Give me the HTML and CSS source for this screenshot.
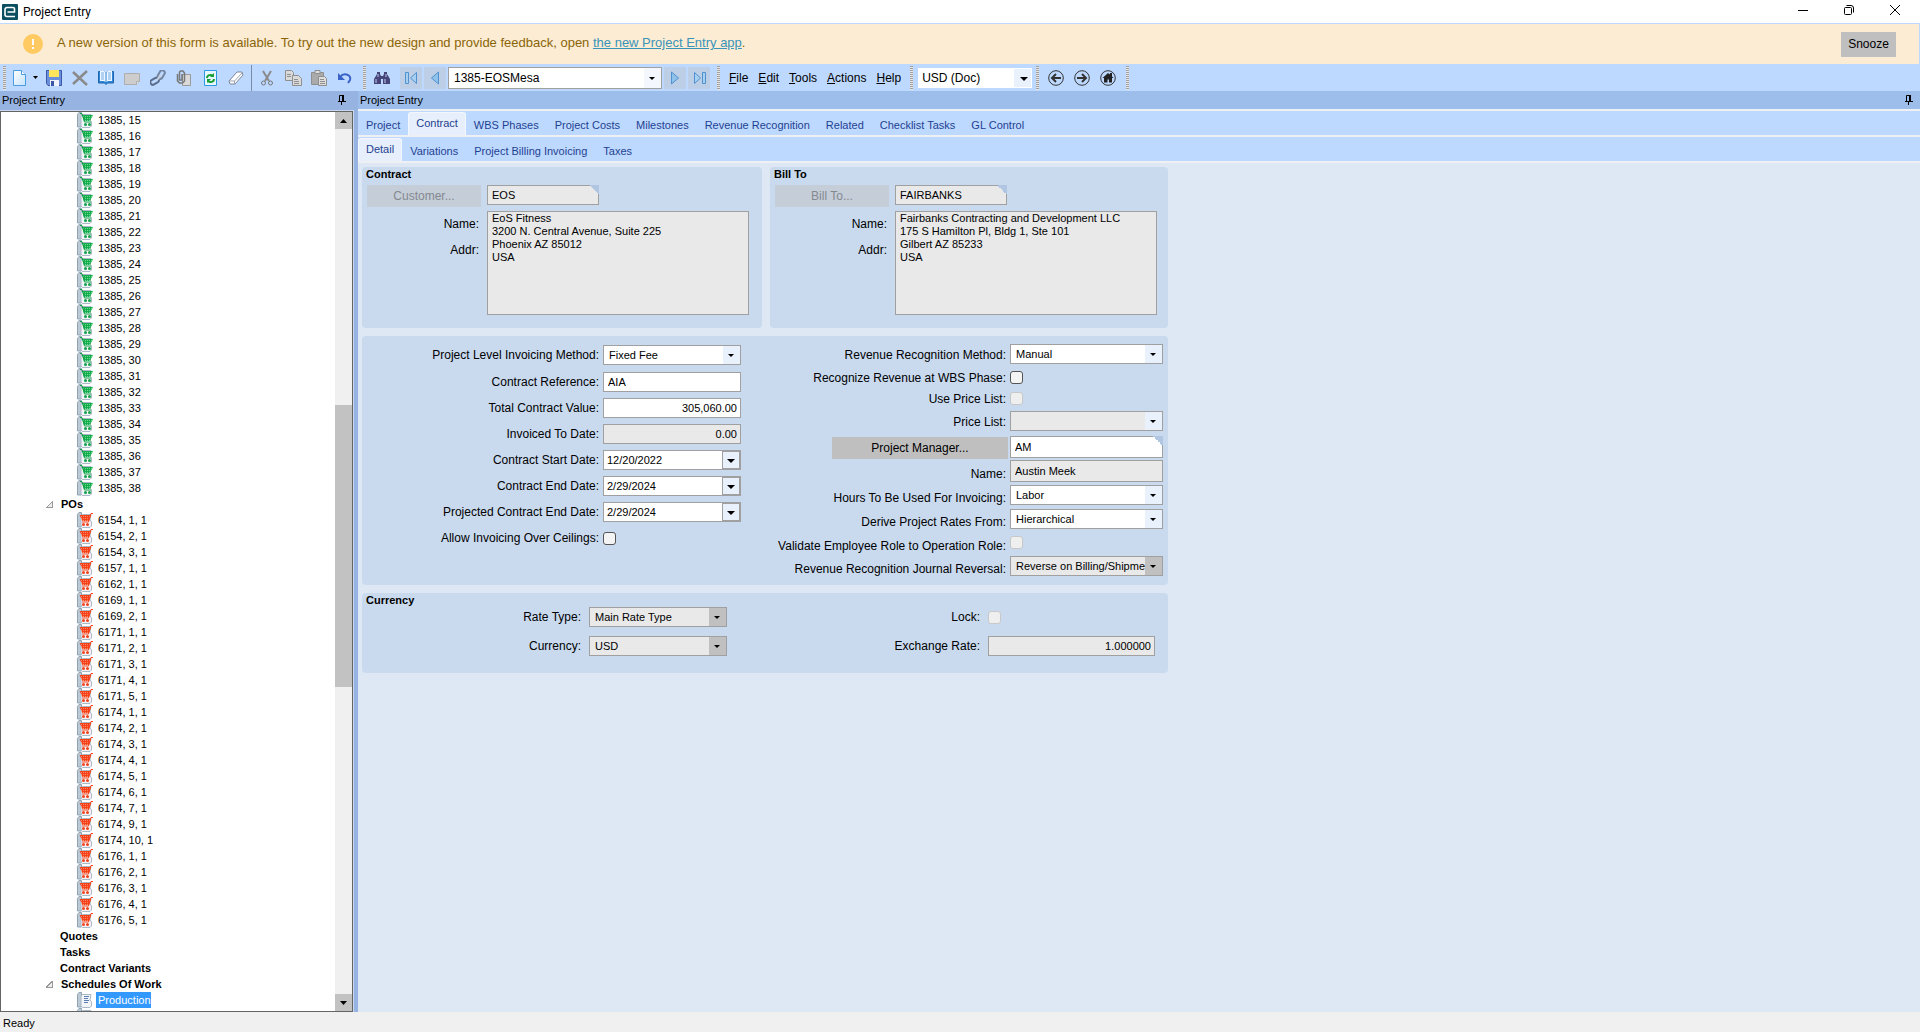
FILE: index.html
```html
<!DOCTYPE html>
<html lang="en">
<head>
<meta charset="utf-8">
<title>Project Entry</title>
<link rel="stylesheet" href="styles.css">
</head>
<body>
<svg class="defs" aria-hidden="true">
  <defs>
    <pattern id="dots-green" width="2" height="2" patternUnits="userSpaceOnUse"><rect width="2" height="2" fill="#14ac4c"/><rect width="1" height="1" fill="#6fd893"/></pattern>
    <pattern id="dots-red" width="2" height="2" patternUnits="userSpaceOnUse"><rect width="2" height="2" fill="#f5401a"/><rect width="1" height="1" fill="#ff8a66"/></pattern>
    <symbol id="folder" viewBox="0 0 16 16">
      <path d="M.5 2.500 2 .5h2.500v14.500H.5z" fill="#bccad6" stroke="#8fa3b3"/>
      <path d="M5.500 2.500 4 4v10l1.500 1.500H13l1.500-1.500v-4L13 8l1-5.500z" fill="#f1f5f8" stroke="#a9b8c4"/>
    </symbol>
    <symbol id="so" viewBox="0 0 16 16">
      <use href="#folder"/>
      <path d="M5 3h11l-3 6H7z" fill="url(#dots-green)"/>
      <path d="M3 1.500h2L7.500 10H14" fill="none" stroke="#12a048"/>
      <circle cx="8.500" cy="12.500" r="1.500" fill="#12a048"/><circle cx="12.500" cy="12.500" r="1.500" fill="#12a048"/>
    </symbol>
    <symbol id="po" viewBox="0 0 16 16">
      <use href="#folder"/>
      <path d="M2.500 3H14l-2 6H5.500z" fill="url(#dots-red)"/>
      <path d="M16 1.500h-2L11.500 10H5" fill="none" stroke="#f5401a"/>
      <circle cx="6.500" cy="12.500" r="1.500" fill="#f5401a"/><circle cx="10.500" cy="12.500" r="1.500" fill="#f5401a"/>
    </symbol>
    <symbol id="doc" viewBox="0 0 16 16">
      <use href="#folder"/>
      <path d="M7 4.500h5M7 6.500h4M7 8.500h5M7 10.500h4" stroke="#5d7fb5"/>
    </symbol>
    <symbol id="pin" viewBox="0 0 8 10">
      <path d="M1.500 6V.5H6M0 6.500h8M3.500 6v4" fill="none" stroke="#000"/><path d="M4 0h2v6H4z"/>
    </symbol>
    <linearGradient id="paper" x1="0" y1="0" x2="1" y2="1"><stop offset="0" stop-color="#fff"/><stop offset="1" stop-color="#c4e2fa"/></linearGradient>
  </defs>
</svg>

<header class="titlebar">
  <svg class="logo" width="16" height="16" viewBox="0 0 16 16"><rect width="16" height="16" rx="1" fill="#0b4f60"/><path d="M13 12.500H5a2 2 0 0 1-2-2V5.500a2 2 0 0 1 2-2h6a1.500 1.500 0 0 1 1.500 1.500v3H5.500" fill="none" stroke="#fff" stroke-width="1.600"/></svg>
  <h1>Project Entry</h1>
  <div class="window-buttons">
    <button aria-label="Minimize"><svg width="12" height="12"><path d="M1 6.500h10" stroke="#000"/></svg></button>
    <button aria-label="Restore"><svg width="12" height="12" fill="none" stroke="#000"><rect x="1.500" y="3.500" width="7" height="7" rx="1"/><path d="M3.500 1.500H8a2.500 2.500 0 0 1 2.500 2.500v4.500"/></svg></button>
    <button aria-label="Close"><svg width="12" height="12"><path d="m1 1 10 10M11 1 1 11" stroke="#000"/></svg></button>
  </div>
</header>

<section class="banner">
  <svg width="20" height="20"><circle cx="10" cy="10" r="10" fill="#ffca62"/><path d="M10 5v6M10 13v2" stroke="#fff" stroke-width="2"/></svg>
  <p>A new version of this form is available. To try out the new design and provide feedback, open <a href="#">the new Project Entry app</a>.</p>
  <button class="snooze">Snooze</button>
</section>

<nav class="toolbar" aria-label="Main">
  <span class="grip"></span>
  <div class="tools">
    <button class="wide" aria-label="New"><svg width="13" height="16"><path d="M.5.5h8l4 4v11H.5z" fill="url(#paper)" stroke="#4a9be0"/><path d="M8.500.5v4h4" fill="#fff" stroke="#4a9be0"/></svg><svg width="5" height="3"><path d="M0 0h5L2.500 3z"/></svg></button>
    <button aria-label="Save"><svg width="16" height="16"><path d="M.5.5h15v15H2l-1.500-2z" fill="#6c8fdc" stroke="#3b57a8"/><path d="M3 0h10v7H3z" fill="#ffe45c"/><path d="M4 10h9v6H4z" fill="#eef3fb"/><path d="M5 11h3v5H5z" fill="#3b57a8"/></svg></button>
    <button aria-label="Delete"><svg width="16" height="16"><path d="m1 2 14 13M15 1 1 14" stroke="#8a8a8a" stroke-width="2.500"/></svg></button>
    <button aria-label="Details"><svg width="16" height="15"><path d="M.5 1.500h6L8 3l1.500-1.500h6V13h-6L8 14.500 6.500 13h-6z" fill="#2e86d8" stroke="#1f66b0"/><path d="M2 1h4l1.500 1v10L6 11H2zM14 1h-4L8.500 2v10l1.500-1h4z" fill="#eef7ff"/><path d="M3 3h3M3 5h3M3 7h3M3 9h3M10 3h3M10 5h3M10 7h3M10 9h3" stroke="#75aee5"/></svg></button>
    <button aria-label="Memo"><svg width="16" height="14"><path d="M.5 2.500h15v8l-3 3H.5z" fill="#cdcdcd" stroke="#adadad"/><path d="M12.500 13.500v-3h3" fill="#eee" stroke="#adadad"/></svg></button>
    <button aria-label="Link"><svg width="16" height="16" fill="none"><rect x="-5" y="-2.500" width="9" height="5" rx="2.500" transform="translate(5 11) rotate(-30)" stroke="#5b6d8c" stroke-width="2"/><rect x="-4" y="-2.500" width="9" height="5" rx="2.500" transform="translate(11 5) rotate(-60)" stroke="#73859f" stroke-width="2"/><path d="m7 10 4-5" stroke="#c8d2e2" stroke-width="2"/></svg></button>
    <button aria-label="Attachments"><svg width="16" height="16"><path d="M6.500 4.500h8v11h-8z" fill="#d9d9d9" stroke="#999"/><path d="M1.500 4v7l2 2h3l2-2V3L7 1H4.500L3.500 2v8H6V4" fill="none" stroke="#777" stroke-width="1.500"/></svg></button>
    <button aria-label="Refresh"><svg width="13" height="16"><path d="M.5.5h12v15H.5z" fill="#e8f7ff" stroke="#2c9ae0"/><path d="M3 8c0-3 4-4 6-2M10 9c0 3-4 4-6 2" fill="none" stroke="#18a035" stroke-width="2"/><path d="M10 3v4H6zM3 13V9h4z" fill="#18a035"/></svg></button>
    <button aria-label="Clear"><svg width="16" height="14"><path d="m1 10 8-9h5l1 3-8 9H2z" fill="#fff" stroke="#7d8799"/><path d="M1.500 10h5L14 2M6.500 10v3" stroke="#9ba5b5" fill="none"/></svg></button>
    <span class="divider"></span>
    <button aria-label="Cut"><svg width="12" height="16" fill="none"><path d="M2 1l6 10M10 1 4 11" stroke="#8a8a8a" stroke-width="2"/><circle cx="2.500" cy="13" r="2" stroke="#777"/><circle cx="9.500" cy="13" r="2" stroke="#777"/></svg></button>
    <button aria-label="Copy"><svg width="17" height="16" fill="#dadada" stroke="#8f8f8f"><path d="M.5.5h6l2 2v8h-8z"/><path d="M7.500 5.500h6l3 3v7h-9z"/><path d="M2 4.500h4M2 6.500h4M9 9.500h4M9 11.500h5M9 13.500h5"/></svg></button>
    <button aria-label="Paste"><svg width="16" height="16" stroke="#8f8f8f"><path d="M.5 2.500h12v12H.5z" fill="#aaa"/><path d="M4 .5h5v3H4z" fill="#ddd"/><path d="M7.500 6.500h6l2 2v7h-8z" fill="#ddd"/><path d="M9 9.500h4M9 11.500h5M9 13.500h5"/></svg></button>
    <button aria-label="Undo"><svg width="14" height="13"><path d="M2 6c4-5 12-2 10 3l-2 3" fill="none" stroke="#3b62c8" stroke-width="2"/><path d="M0 2v7h7z" fill="#3b62c8"/></svg></button>
  </div>
  <span class="grip"></span>
  <div class="record-nav">
    <button class="find" aria-label="Find"><svg width="16" height="14" fill="#45457c"><path d="M3 1h3v2l1 2v8H0V8l3-5zM13 1h-3v2L9 5v8h7V8l-3-5z"/><path d="M6 5h4v3H6z"/><path d="M2 8v4M11 8v4M4 3v3M12 3v3" stroke="#c5cbe8"/></svg></button>
    <button class="step" aria-label="First record"><svg width="13" height="14" fill="#a7d0f0" stroke="#5191cf"><path d="M.5 1.500h3v11h-3zM11.500 1.500v11L5.500 7z"/></svg></button>
    <button class="step" aria-label="Previous record"><svg width="13" height="14" fill="#8fc2ea" stroke="#5191cf"><path d="M9.500 1v12L2.500 7z"/></svg></button>
    <div class="combo record"><select aria-label="Project"><option>1385-EOSMesa</option></select></div>
    <button class="step" aria-label="Next record"><svg width="13" height="14" fill="#8fc2ea" stroke="#5191cf"><path d="M2.500 1v12l7-6z"/></svg></button>
    <button class="step" aria-label="Last record"><svg width="13" height="14" fill="#a7d0f0" stroke="#5191cf"><path d="M9.500 1.500h3v11h-3zM1.500 1.500v11l6-5.500z"/></svg></button>
  </div>
  <span class="grip"></span>
  <div class="menus">
    <button><u>F</u>ile</button><button><u>E</u>dit</button><button><u>T</u>ools</button><button><u>A</u>ctions</button><button><u>H</u>elp</button>
  </div>
  <span class="grip"></span>
  <div class="combo currency"><select aria-label="Display currency"><option>USD (Doc)</option></select></div>
  <span class="grip"></span>
  <div class="history">
    <button aria-label="Back"><svg width="16" height="16" fill="none" stroke="#333"><circle cx="8" cy="8" r="7.300"/><path d="M13 8H4M8 4 4 8l4 4" stroke-width="2"/></svg></button>
    <button aria-label="Forward"><svg width="16" height="16" fill="none" stroke="#333"><circle cx="8" cy="8" r="7.300"/><path d="M3 8h9M8 4l4 4-4 4" stroke-width="2"/></svg></button>
    <button aria-label="Home"><svg width="16" height="16"><circle cx="8" cy="8" r="7.300" fill="none" stroke="#333"/><path d="m2.500 8 5.500-5 2 1.500V3h2v3.500L13.500 8H12v4.500H9v-3H7.500v3H4V8z" fill="#222"/></svg></button>
  </div>
  <span class="grip"></span>
</nav>

<div class="workspace">
  <aside class="tree-pane">
    <header class="pane-head"><h2>Project Entry</h2><button aria-label="Pin tree"><svg width="8" height="10"><use href="#pin"/></svg></button></header>
    <div class="tree-box">
      <ul class="tree">
        <li class="leaf"><svg><use href="#so"/></svg><span>1385, 15</span></li>
        <li class="leaf"><svg><use href="#so"/></svg><span>1385, 16</span></li>
        <li class="leaf"><svg><use href="#so"/></svg><span>1385, 17</span></li>
        <li class="leaf"><svg><use href="#so"/></svg><span>1385, 18</span></li>
        <li class="leaf"><svg><use href="#so"/></svg><span>1385, 19</span></li>
        <li class="leaf"><svg><use href="#so"/></svg><span>1385, 20</span></li>
        <li class="leaf"><svg><use href="#so"/></svg><span>1385, 21</span></li>
        <li class="leaf"><svg><use href="#so"/></svg><span>1385, 22</span></li>
        <li class="leaf"><svg><use href="#so"/></svg><span>1385, 23</span></li>
        <li class="leaf"><svg><use href="#so"/></svg><span>1385, 24</span></li>
        <li class="leaf"><svg><use href="#so"/></svg><span>1385, 25</span></li>
        <li class="leaf"><svg><use href="#so"/></svg><span>1385, 26</span></li>
        <li class="leaf"><svg><use href="#so"/></svg><span>1385, 27</span></li>
        <li class="leaf"><svg><use href="#so"/></svg><span>1385, 28</span></li>
        <li class="leaf"><svg><use href="#so"/></svg><span>1385, 29</span></li>
        <li class="leaf"><svg><use href="#so"/></svg><span>1385, 30</span></li>
        <li class="leaf"><svg><use href="#so"/></svg><span>1385, 31</span></li>
        <li class="leaf"><svg><use href="#so"/></svg><span>1385, 32</span></li>
        <li class="leaf"><svg><use href="#so"/></svg><span>1385, 33</span></li>
        <li class="leaf"><svg><use href="#so"/></svg><span>1385, 34</span></li>
        <li class="leaf"><svg><use href="#so"/></svg><span>1385, 35</span></li>
        <li class="leaf"><svg><use href="#so"/></svg><span>1385, 36</span></li>
        <li class="leaf"><svg><use href="#so"/></svg><span>1385, 37</span></li>
        <li class="leaf"><svg><use href="#so"/></svg><span>1385, 38</span></li>
        <li class="branch open">POs</li>
        <li class="leaf"><svg><use href="#po"/></svg><span>6154, 1, 1</span></li>
        <li class="leaf"><svg><use href="#po"/></svg><span>6154, 2, 1</span></li>
        <li class="leaf"><svg><use href="#po"/></svg><span>6154, 3, 1</span></li>
        <li class="leaf"><svg><use href="#po"/></svg><span>6157, 1, 1</span></li>
        <li class="leaf"><svg><use href="#po"/></svg><span>6162, 1, 1</span></li>
        <li class="leaf"><svg><use href="#po"/></svg><span>6169, 1, 1</span></li>
        <li class="leaf"><svg><use href="#po"/></svg><span>6169, 2, 1</span></li>
        <li class="leaf"><svg><use href="#po"/></svg><span>6171, 1, 1</span></li>
        <li class="leaf"><svg><use href="#po"/></svg><span>6171, 2, 1</span></li>
        <li class="leaf"><svg><use href="#po"/></svg><span>6171, 3, 1</span></li>
        <li class="leaf"><svg><use href="#po"/></svg><span>6171, 4, 1</span></li>
        <li class="leaf"><svg><use href="#po"/></svg><span>6171, 5, 1</span></li>
        <li class="leaf"><svg><use href="#po"/></svg><span>6174, 1, 1</span></li>
        <li class="leaf"><svg><use href="#po"/></svg><span>6174, 2, 1</span></li>
        <li class="leaf"><svg><use href="#po"/></svg><span>6174, 3, 1</span></li>
        <li class="leaf"><svg><use href="#po"/></svg><span>6174, 4, 1</span></li>
        <li class="leaf"><svg><use href="#po"/></svg><span>6174, 5, 1</span></li>
        <li class="leaf"><svg><use href="#po"/></svg><span>6174, 6, 1</span></li>
        <li class="leaf"><svg><use href="#po"/></svg><span>6174, 7, 1</span></li>
        <li class="leaf"><svg><use href="#po"/></svg><span>6174, 9, 1</span></li>
        <li class="leaf"><svg><use href="#po"/></svg><span>6174, 10, 1</span></li>
        <li class="leaf"><svg><use href="#po"/></svg><span>6176, 1, 1</span></li>
        <li class="leaf"><svg><use href="#po"/></svg><span>6176, 2, 1</span></li>
        <li class="leaf"><svg><use href="#po"/></svg><span>6176, 3, 1</span></li>
        <li class="leaf"><svg><use href="#po"/></svg><span>6176, 4, 1</span></li>
        <li class="leaf"><svg><use href="#po"/></svg><span>6176, 5, 1</span></li>
        <li class="branch">Quotes</li>
        <li class="branch">Tasks</li>
        <li class="branch">Contract Variants</li>
        <li class="branch open">Schedules Of Work</li>
        <li class="leaf selected"><svg><use href="#doc"/></svg><span>Production</span></li>
        <li class="leaf"><svg><use href="#folder"/></svg></li>
      </ul>
      <div class="scrollbar">
        <button aria-label="Scroll up"><svg width="7" height="4"><path d="M0 4 3.500 0 7 4z"/></svg></button>
        <div class="track"><div class="thumb"></div></div>
        <button aria-label="Scroll down"><svg width="7" height="4"><path d="M0 0h7L3.500 4z"/></svg></button>
      </div>
    </div>
  </aside>

  <main class="main-pane">
    <header class="pane-head"><h2>Project Entry</h2><button aria-label="Pin form"><svg width="8" height="10"><use href="#pin"/></svg></button></header>
    <nav class="tabs">
      <a href="#">Project</a><a href="#" class="active">Contract</a><a href="#">WBS Phases</a><a href="#">Project Costs</a><a href="#">Milestones</a><a href="#">Revenue Recognition</a><a href="#">Related</a><a href="#">Checklist Tasks</a><a href="#">GL Control</a>
    </nav>
    <nav class="tabs inner">
      <a href="#" class="active">Detail</a><a href="#">Variations</a><a href="#">Project Billing Invoicing</a><a href="#">Taxes</a>
    </nav>
    <form class="sheet">
      <div class="parties">
        <section class="group">
          <h3>Contract</h3>
          <div class="party">
            <button type="button" class="lookup-btn" disabled>Customer...</button>
            <div class="lookup id"><input aria-label="Customer" value="EOS" readonly></div>
            <div class="party-labels"><label for="cust">Name:</label><label for="cust">Addr:</label></div>
            <textarea id="cust" readonly>EoS Fitness
3200 N. Central Avenue, Suite 225
Phoenix AZ 85012
USA</textarea>
          </div>
        </section>
        <section class="group">
          <h3>Bill To</h3>
          <div class="party">
            <button type="button" class="lookup-btn" disabled>Bill To...</button>
            <div class="lookup id"><input aria-label="Bill to customer" value="FAIRBANKS" readonly></div>
            <div class="party-labels"><label for="bill">Name:</label><label for="bill">Addr:</label></div>
            <textarea id="bill" readonly>Fairbanks Contracting and Development LLC
175 S Hamilton Pl, Bldg 1, Ste 101
Gilbert AZ 85233
USA</textarea>
          </div>
        </section>
      </div>

      <section class="group terms">
        <div class="fields left">
          <label for="f1">Project Level Invoicing Method:</label><div class="combo"><select id="f1"><option>Fixed Fee</option></select></div>
          <label for="f2">Contract Reference:</label><input id="f2" class="box" value="AIA">
          <label for="f3">Total Contract Value:</label><input id="f3" class="box num" value="305,060.00">
          <label for="f4">Invoiced To Date:</label><input id="f4" class="box num" value="0.00" readonly>
          <label for="f5">Contract Start Date:</label><div class="date"><input id="f5" value="12/20/2022"><button type="button" aria-label="Pick start date"></button></div>
          <label for="f6">Contract End Date:</label><div class="date"><input id="f6" value="2/29/2024"><button type="button" aria-label="Pick end date"></button></div>
          <label for="f7">Projected Contract End Date:</label><div class="date"><input id="f7" value="2/29/2024"><button type="button" aria-label="Pick projected end date"></button></div>
          <label for="f8">Allow Invoicing Over Ceilings:</label><input id="f8" type="checkbox">
        </div>
        <div class="fields right">
          <label for="g1">Revenue Recognition Method:</label><div class="combo"><select id="g1"><option>Manual</option></select></div>
          <label for="g2">Recognize Revenue at WBS Phase:</label><input id="g2" type="checkbox">
          <label for="g3">Use Price List:</label><input id="g3" type="checkbox" disabled>
          <label for="g4">Price List:</label><div class="combo gray"><select id="g4"><option></option></select></div>
          <button type="button" class="lookup-btn manager">Project Manager...</button><div class="lookup"><input aria-label="Project manager" value="AM"></div>
          <label for="g6">Name:</label><input id="g6" class="box tall" value="Austin Meek" readonly>
          <label for="g7">Hours To Be Used For Invoicing:</label><div class="combo"><select id="g7"><option>Labor</option></select></div>
          <label for="g8">Derive Project Rates From:</label><div class="combo"><select id="g8"><option>Hierarchical</option></select></div>
          <label for="g9">Validate Employee Role to Operation Role:</label><input id="g9" type="checkbox" disabled>
          <label for="g10">Revenue Recognition Journal Reversal:</label><div class="combo off"><select id="g10" disabled><option>Reverse on Billing/Shipment</option></select></div>
        </div>
      </section>

      <section class="group money">
        <h3>Currency</h3>
        <div class="rates">
          <div class="fields">
            <label for="h1">Rate Type:</label><div class="combo off"><select id="h1" disabled><option>Main Rate Type</option></select></div>
            <label for="h2">Currency:</label><div class="combo off"><select id="h2" disabled><option>USD</option></select></div>
          </div>
          <div class="fields">
            <label for="h3">Lock:</label><input id="h3" type="checkbox" disabled>
            <label for="h4">Exchange Rate:</label><input id="h4" class="box num" value="1.000000" readonly>
          </div>
        </div>
      </section>
    </form>
  </main>
</div>
<footer class="status">Ready</footer>
</body>
</html>
```
FILE: styles.css
```css
* { box-sizing: border-box; }
body {
  margin: 0;
  height: 100vh;
  display: flex;
  flex-direction: column;
  overflow: hidden;
  font: 11px/16px "Liberation Sans", Arial, sans-serif;
  color: #000;
  background: #bdd9ff;
}
button, input, select, textarea { font: inherit; color: inherit; margin: 0; border-radius: 0; }
button { background: none; border: 0; padding: 0; }
h1, h2, h3, p, ul { margin: 0; padding: 0; font-size: inherit; font-weight: normal; }
svg { display: block; flex: none; }
.defs { position: absolute; width: 0; height: 0; }

/* Title bar and notice */
.titlebar { display: flex; align-items: center; height: 23px; padding-left: 2px; background: #fff; flex: none; }
.titlebar h1 { font: 12px/20px Roboto, sans-serif; margin-left: 5px; flex: 1; }
.window-buttons { display: flex; gap: 34px; padding: 0 19px 4px 0; }
.banner {
  display: flex; align-items: center; flex: none;
  height: 40px; margin: 1px 1px 0 0; padding: 0 23px;
  background: #fcecd3; color: #8a6508;
}
.banner p { flex: 1; margin-left: 14px; padding-bottom: 2px; font-size: 13px; }
.banner a { color: #3a93b8; }
.snooze { width: 55px; height: 25px; background: #bfbfbf; color: #000; font-size: 12px; }

/* Toolbar */
.toolbar { display: flex; align-items: center; height: 27px; padding-left: 3px; flex: none; font-size: 12px; }
.grip { width: 3px; height: 24px; flex: none; background: repeating-linear-gradient(#a0a0a0 0 1px, #e6e6e6 1px 2px); }
.tools { display: flex; align-items: center; margin-left: 4px; width: 353px; }
.tools button { width: 26px; height: 20px; display: flex; align-items: center; justify-content: center; }
.tools .wide { width: 31px; gap: 7px; }
.divider { width: 1px; height: 26px; margin: 0 2px; background: #7b8ba5; }
.record-nav { display: flex; align-items: center; gap: 2px; margin-right: 7px; }
.find { width: 32px; display: flex; justify-content: center; }
.step { width: 22px; height: 22px; display: flex; align-items: center; justify-content: center; background: #bdcfe7; }
.step + .step { margin: 0; }
.menus { display: flex; gap: 10px; padding: 0 9px 0 9px; }
.history { display: flex; gap: 10px; padding: 0 10px 0 9px; }

/* Drop-down lists */
.combo { position: relative; height: 20px; border: 1px solid #a0a0a0; background: #fff; }
.combo select {
  appearance: none; display: block; width: 100%; height: 100%;
  border: 0; padding: 0 17px 0 5px; background: transparent; color: #000; opacity: 1;
}
.combo::before {
  content: ""; position: absolute; top: 0; right: 0; bottom: 0; width: 17px;
  background: #e9f1fc; pointer-events: none;
}
.combo::after, .date button::after {
  content: ""; position: absolute; top: calc(50% - 1px); right: 6px;
  border: 3px solid transparent; border-top-color: #000; border-bottom: 0; pointer-events: none;
}
.combo.gray, .combo.off { background: #e9e9e9; }
.combo.off::before { background: #c0c0c0; }
.combo.record { width: 214px; height: 22px; }
.combo.record::before { background: #f4f8fe; }
.combo.currency { width: 114px; border-color: #fff; margin: 0 4px 0 5px; }
.combo.currency select { padding-left: 3px; }
.combo.currency::after { border-width: 4px 4px 0; right: 3px; }

/* Workspace */
.workspace { display: flex; flex: 1; min-height: 0; }
.tree-pane { width: 358px; flex: none; display: flex; flex-direction: column; background: #96b3e2; }
.pane-head { display: flex; align-items: center; justify-content: space-between; height: 18px; flex: none; padding: 0 7px 0 2px; }
.pane-head button { display: block; }
.tree-pane .pane-head { padding-right: 12px; }
.tree-box { display: flex; flex: 1; min-height: 0; margin: 2px 5px 0 0; border: 1px solid #646464; background: #fff; outline: 1px solid #c9d9f1; }
.tree { list-style: none; flex: 1; overflow: hidden; }
.tree li { display: flex; align-items: center; height: 16px; white-space: nowrap; }
.leaf { padding-left: 76px; }
.leaf svg { width: 16px; height: 16px; }
.leaf span { margin-left: 3px; padding: 0 0 0 2px; }
.selected span { background: #3399ff; color: #fff; }
.branch { padding-left: 59px; font-weight: bold; }
.branch.open { padding-left: 45px; }
.branch.open::before { content: ""; width: 6px; height: 6px; margin-right: 8px; background: linear-gradient(to bottom right, transparent 50%, #999 50% 60%, #eee 60%); border-right: 1px solid #999; border-bottom: 1px solid #999; }
.scrollbar { width: 17px; display: flex; flex-direction: column; background: #f0f0f0; }
.scrollbar button { height: 17px; display: flex; align-items: center; justify-content: center; background: #c2c2c2; }
.track { flex: 1; display: grid; grid-template-rows: 276fr 282fr 307fr; }
.thumb { grid-row: 2; background: #c2c2c2; }

.main-pane { flex: 1; min-width: 0; display: flex; flex-direction: column; background: #dee8f4; }
.main-pane .pane-head { background: #9dbeea; }
.tabs { display: flex; align-items: flex-end; height: 26px; flex: none; border-top: 2px solid #eef0f4; background: #bdd9ff; }
.tabs.inner { height: 28px; border-bottom: 2px solid #eef0f4; }
.tabs a { height: 22px; padding: 4px 8px 0; color: #1f4191; text-decoration: none; white-space: nowrap; }
.tabs .active { height: 23px; padding: 2px 7px 0; border: 1px solid #f2f7fd; border-bottom: 0; border-radius: 3px 3px 0 0; background: #e6effb; }

/* Form sheet */
.sheet { padding: 4px; width: 100%; max-width: 814px; display: grid; gap: 8px; }
.parties { display: grid; grid-template-columns: 400px 1fr; gap: 8px; }
.group { background: #c9daef; border-radius: 4px; }
.group h3 { padding-left: 4px; line-height: 14px; font-weight: bold; }
.party { display: grid; grid-template-columns: 114px 262px; column-gap: 6px; row-gap: 4px; padding: 4px 0 13px 5px; }
.lookup-btn { height: 22px; background: #c5cdd9; color: #84898f; font-size: 12px; }
.lookup { position: relative; height: 22px; border: 1px solid #a0a0a0; background: #fff; }
.lookup.id { width: 112px; height: 20px; background: #e9e9e9; }
.lookup input { width: 100%; height: 100%; border: 0; padding: 0 4px; background: none; display: block; }
.lookup::after {
  content: ""; position: absolute; top: -1px; right: -1px; width: 10px; height: 10px;
  background: linear-gradient(to top right, transparent 50%, #b0c6e2 50%);
}
textarea { height: 104px; resize: none; border: 1px solid #a0a0a0; padding: 0 4px; background: #e9e9e9; line-height: 13px; display: block; overflow: hidden; }
label { font-size: 12px; white-space: nowrap; text-align: right; }
.party-labels { display: grid; align-content: start; row-gap: 10px; padding: 5px 2px 0 0; }
.box, .date { height: 20px; border: 1px solid #a0a0a0; padding: 0 4px; background: #fff; width: 100%; }
.box[readonly] { background: #e9e9e9; }
.box.num { text-align: right; padding: 0 3px; }
.box.tall { height: 22px; }
.date { display: flex; padding: 0 0 0 3px; }
.date input { flex: 1; min-width: 0; border: 0; padding: 0; background: none; }
.date button { position: relative; width: 18px; border: 1px solid #a0a0a0; background: #e9f1fc; }
.date button::after { border-width: 4px 4px 0; right: 4px; }
.fields { display: grid; align-items: center; column-gap: 4px; align-content: start; }
input[type="checkbox"] { appearance: none; width: 13px; height: 13px; border: 1px solid #555; border-radius: 3px; background: #f4f4f4; }
input[type="checkbox"]:disabled { border-color: #c8c8c8; background: #efefef; }

.terms { display: grid; grid-template-columns: 379px 422px; justify-content: start; padding: 4px 0 7px; }
.fields.left { grid-template-columns: 237px 138px; grid-template-rows: 29px repeat(7, 26px); }
.fields.right { grid-template-columns: 265px 153px; padding-top: 2px; grid-template-rows: 24px 22px 20px 26px 25px 24px 24px 24px 23px 24px; }
.fields.right label { padding-top: 2px; }
.fields.right label:nth-of-type(n+5) { padding-top: 6px; }
.manager { margin: 2px -2px 0 91px; background: #bfbfbf; color: #000; }
.rates { display: grid; grid-template-columns: 365px 428px; padding-bottom: 8px; }
.rates .fields { grid-template-columns: 219px 138px; column-gap: 8px; grid-template-rows: 20px 38px; }
.rates .fields + .fields { grid-template-columns: 253px 167px; }

.status { height: 20px; flex: none; padding: 3px 3px 0; line-height: 16px; background: #f0f0f0; }
```
